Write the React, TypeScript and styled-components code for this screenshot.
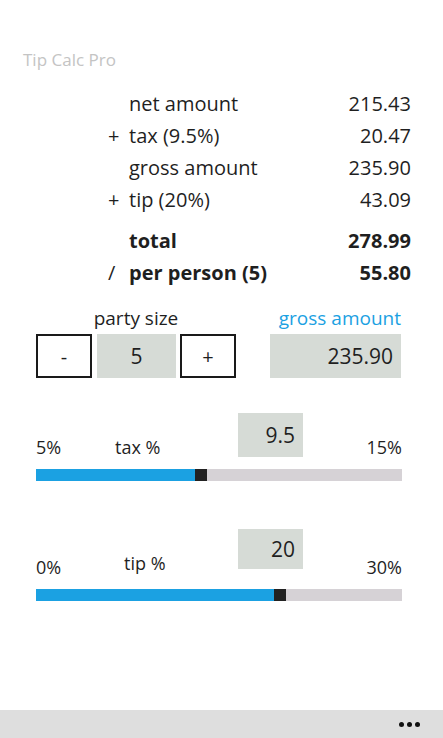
import React from "react"
import styled, { createGlobalStyle } from "styled-components"

const GlobalStyle = createGlobalStyle`
  html, body {
    margin: 0;
    padding: 0;
    background: #fff;
  }
  body {
    font-family: "Open Sans", "Noto Sans", sans-serif;
    color: #1f1f1f;
  }
`

const Page = styled.div`
  display: flex;
  flex-direction: column;
  width: 443px;
  height: 738px;
  overflow: hidden;
`

const Title = styled.div`
  padding: 48px 0 0 23px;
  height: 24px;
  line-height: 24px;
  font-size: 17px;
  color: #c4c4c4;
`

const Summary = styled.div`
  display: grid;
  grid-template-columns: 23px 1fr auto;
  margin: 16px 32px 0 106px;
  font-size: 20px;
  line-height: 32px;
`

const Cell = styled.span<{ $bold?: boolean; $gap?: boolean }>`
  font-weight: ${(p) => (p.$bold ? 700 : 400)};
  margin-top: ${(p) => (p.$gap ? "9px" : "0")};
`

const Sign = styled(Cell)`
  font-weight: 400;
  padding-left: 2px;
`

const Label = styled(Cell)``

const Value = styled(Cell)`
  text-align: right;
`

const Controls = styled.div`
  display: flex;
  justify-content: space-between;
  margin: 17px 42px 0 36px;
`

const Group = styled.div`
  display: flex;
  flex-direction: column;
  gap: 4px;
`

const Caption = styled.div<{ $accent?: boolean; $align?: string }>`
  height: 24px;
  line-height: 24px;
  font-size: 19px;
  color: ${(p) => (p.$accent ? "#1ba1e2" : "#1f1f1f")};
  text-align: ${(p) => p.$align ?? "center"};
`

const Stepper = styled.div`
  display: flex;
  align-items: center;
`

const StepButton = styled.button`
  box-sizing: border-box;
  width: 56px;
  height: 44px;
  border: 2px solid #1a1a1a;
  background: #fff;
  font-family: inherit;
  font-size: 20px;
  color: #1f1f1f;
  padding: 0;
`

const Field = styled.div<{ $w: number; $h?: number; $align?: string }>`
  box-sizing: border-box;
  width: ${(p) => p.$w}px;
  height: ${(p) => p.$h ?? 44}px;
  background: #d6dbd6;
  display: flex;
  align-items: center;
  justify-content: ${(p) => p.$align ?? "center"};
  padding: 0 8px;
  font-size: 21px;
  color: #1f1f1f;
`

const CountField = styled(Field)`
  margin: 0 4px 0 5px;
`

const SliderBlock = styled.div<{ $top: number }>`
  margin: ${(p) => p.$top}px 41px 0 36px;
`

const SliderHead = styled.div`
  display: grid;
  grid-template-columns: 79px 123px 65px 1fr;
  align-items: end;
  margin-bottom: 10px;
  font-size: 18px;
  line-height: 24px;
`

const HeadText = styled.span<{ $lift?: number; $indent?: number; $align?: string }>`
  padding-bottom: ${(p) => p.$lift ?? 0}px;
  padding-left: ${(p) => p.$indent ?? 0}px;
  text-align: ${(p) => p.$align ?? "left"};
`

const ValueBox = styled(Field)<{ $drop: number }>`
  margin-bottom: ${(p) => p.$drop}px;
  justify-content: flex-end;
`

const Track = styled.div`
  display: flex;
  height: 12px;
  background: #d6d2d6;
`

const Fill = styled.div`
  background: #1ba1e2;
`

const Thumb = styled.div`
  width: 12px;
  background: #222;
`

const AppBar = styled.div`
  margin-top: auto;
  height: 28px;
  background: #dedede;
  display: flex;
  align-items: center;
  justify-content: flex-end;
  gap: 3px;
  padding-right: 23px;
`

const Dot = styled.span`
  width: 5px;
  height: 5px;
  border-radius: 50%;
  background: #111;
`

type SliderProps = {
  min: string
  max: string
  label: string
  value: string
  ratio: number
  boxHeight: number
  drop: number
  top: number
  labelLift?: number
  labelIndent?: number
}

function Slider(props: SliderProps) {
  const { min, max, label, value, ratio, boxHeight, drop, top, labelLift, labelIndent } = props
  const trackWidth = 366
  const fillWidth = Math.round(trackWidth * ratio) - 6
  return (
    <SliderBlock $top={top}>
      <SliderHead>
        <HeadText>{min}</HeadText>
        <HeadText $lift={labelLift} $indent={labelIndent}>
          {label}
        </HeadText>
        <ValueBox $w={65} $h={boxHeight} $drop={drop}>
          {value}
        </ValueBox>
        <HeadText $align="right">{max}</HeadText>
      </SliderHead>
      <Track>
        <Fill style={{ width: fillWidth }} />
        <Thumb />
      </Track>
    </SliderBlock>
  )
}

export default function App() {
  return (
    <Page>
      <GlobalStyle />
      <Title>Tip Calc Pro</Title>
      <Summary>
        <Sign />
        <Label>net amount</Label>
        <Value>215.43</Value>
        <Sign>+</Sign>
        <Label>tax (9.5%)</Label>
        <Value>20.47</Value>
        <Sign />
        <Label>gross amount</Label>
        <Value>235.90</Value>
        <Sign>+</Sign>
        <Label>tip (20%)</Label>
        <Value>43.09</Value>
        <Sign $gap />
        <Label $bold $gap>
          total
        </Label>
        <Value $bold $gap>
          278.99
        </Value>
        <Sign>/</Sign>
        <Label $bold>per person (5)</Label>
        <Value $bold>55.80</Value>
      </Summary>
      <Controls>
        <Group>
          <Caption>party size</Caption>
          <Stepper>
            <StepButton>-</StepButton>
            <CountField $w={79}>5</CountField>
            <StepButton>+</StepButton>
          </Stepper>
        </Group>
        <Group>
          <Caption $accent $align="right">
            gross amount
          </Caption>
          <Field $w={131} $align="flex-end">
            235.90
          </Field>
        </Group>
      </Controls>
      <Slider top={35} min="5%" max="15%" label="tax %" value="9.5" ratio={0.45} boxHeight={44} drop={2} />
      <Slider
        top={48}
        min="0%"
        max="30%"
        label="tip %"
        value="20"
        ratio={0.667}
        boxHeight={40}
        drop={10}
        labelLift={4}
        labelIndent={9}
      />
      <AppBar>
        <Dot />
        <Dot />
        <Dot />
      </AppBar>
    </Page>
  )
}
